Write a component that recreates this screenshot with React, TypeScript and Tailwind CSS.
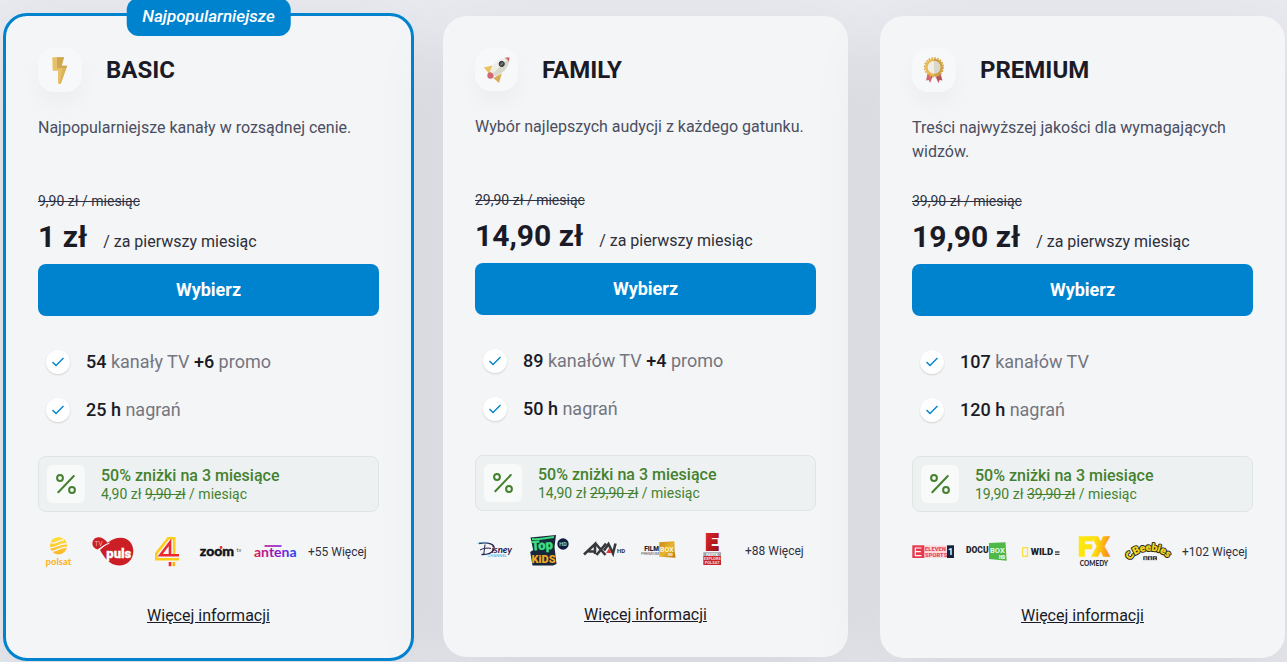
import type { ReactNode } from 'react';

type Plan = {
  id: string;
  name: string;
  icon: ReactNode;
  description: string;
  oldPrice: string;
  price: string;
  features: { strong: string; text: string; extra?: string; extraText?: string }[];
  promoPrice: string;
  promoOldPrice: string;
  logos: { name: string; art: ReactNode }[];
  more: string;
  popular?: boolean;
};

function BoltIcon() {
  return (
    <svg width="28" height="28" viewBox="0 0 28 28" aria-hidden="true">
      <path d="M6.3 1.3H18l-2.3 8.4h5.6l-6.6 18H12v-13H6.7z" fill="#e7c068" />
      <path d="M11 1.3h7l-2.3 8.4h5.6l-1 2.6H11z" fill="#cda753" />
      <path d="M20.3 12.3l-5.6 15.4H13.3l3.5-15.4z" fill="#d9b25c" />
    </svg>
  );
}

function RocketIcon() {
  return (
    <svg width="27" height="27" viewBox="0 0 27 27" aria-hidden="true">
      <path d="M.8 11.6 9.5 9.5l-3 8.6z" fill="#ecc261" />
      <path d="M18.8 17.6 16 27l-5.6-5z" fill="#d7ae55" />
      <circle cx="7.5" cy="19.5" r="3.2" fill="#d06a72" />
      <path d="M26.3 1.3C26.5 9 23 16 12.5 20.3L7 15C11 5.5 18.5 1.2 26.3 1.3z" fill="#efeee6" />
      <path d="M26.3 1.3C26.5 9 23 16 12.5 20.3l-2.7-2.6z" fill="#dad8cb" />
      <path d="M26.3 1.3c.1 1.700-.1 3.200-.5 4.600-.9-1.900-2.200-3.200-4.200-3.900 1.500-.5 3-.7 4.700-.7z" fill="#d06a72" />
      <circle cx="18.7" cy="7.9" r="2.6" fill="#4b5053" stroke="#30363a" />
      <path d="M17.5 9.3 20 6.7" stroke="#a5aaab" strokeWidth=".8" />
    </svg>
  );
}

function MedalIcon() {
  return (
    <svg width="28" height="28" viewBox="0 0 28 28" aria-hidden="true">
      <path d="M7.5 17.5 6 24.5l2.7-.5 1.3 3 3.2-7.5z" fill="#d36772" />
      <path d="M20.5 17.5l1.9 7-2.8-.5-1.2 3-3.2-7.5z" fill="#b9545f" />
      <circle cx="14" cy="11.3" r="9.4" fill="none" stroke="#d9a845" strokeWidth="1.5" strokeDasharray="1.7 1.25" />
      <circle cx="14" cy="11.3" r="8.9" fill="#e9b953" />
      <path d="M14 2.4a8.9 8.9 0 0 1 0 17.8z" fill="#cfa048" />
      <circle cx="14" cy="11.3" r="6.3" fill="#f0efe5" />
      <path d="M14 5a6.3 6.3 0 0 1 0 12.6z" fill="#dad8ca" />
    </svg>
  );
}

function CheckIcon() {
  return (
    <svg width="14" height="12" viewBox="0 0 14 12" fill="none" aria-hidden="true">
      <path d="M1.5 6 5 9.5 12.5 2" stroke="#0083cf" strokeWidth="1.4" />
    </svg>
  );
}

function PercentIcon() {
  return (
    <svg width="20" height="20" viewBox="0 0 20 20" fill="none" stroke="#44812f" strokeWidth="2" aria-hidden="true">
      <path d="M2.3 18.3 17.8 2" strokeLinecap="round" />
      <circle cx="4" cy="4" r="2.9" />
      <circle cx="16" cy="16" r="2.9" />
    </svg>
  );
}

const polsat = (
  <>
    <defs>
      <linearGradient id="polsatSun" x1="0" y1="0" x2="0" y2="1">
        <stop offset="0" stopColor="#ffe23a" />
        <stop offset="1" stopColor="#fdb42a" />
      </linearGradient>
    </defs>
    <circle cx="20.5" cy="9.7" r="8.7" fill="url(#polsatSun)" />
    <g fill="none" stroke="#f4f5f7" strokeWidth="1.3">
      <path d="M12 6.5c5 3 9-3.5 14-2.5" />
      <path d="M11 11c6 3 11-5 18-3" />
      <path d="M12 15c6 2 10-5 17-3.5" />
    </g>
    <text x="20.5" y="29" textAnchor="middle" fontSize="9.5" fontWeight="900" fill="#fbb52c" fontFamily="Lato">polsat</text>
  </>
);

const puls = (
  <>
    <path d="M8 14C14 9 19 1.5 29 1.8c7 .2 12.3 5.500 12.3 13.2C41.3 24 35 29.5 27 29.4 17 29.3 12 21 8 14z" fill="#cb1f25" />
    <path d="M6.3 1.3c4.500-.3 7 3 9.700 5.700-3.500 1-7 4.500-10.500 6.500C2 12.5.3 10 .4 7.200.6 4 3 1.5 6.3 1.3z" fill="#cb1f25" />
    <path d="M5.500 14.500C9 12.5 13 8.5 17.5 7.2" stroke="#f4f5f7" fill="none" />
    <text x="2.5" y="9.5" fontSize="6.5" fill="#f3b5b5" fontFamily="Roboto">TV</text>
    <text x="26.8" y="21.500" textAnchor="middle" fontSize="13" fontWeight="900" fill="#fff" stroke="#fff" strokeWidth=".3" fontFamily="Roboto">puls</text>
  </>
);

const tv4 = (
  <g fill="none" strokeWidth="2.6">
    <path d="M28.2 18V2.3H22.3L10.3 17.5v5.8H33" stroke="#fdcd17" />
    <path d="M24 18V6.3L14.3 19.2H33" stroke="#ea2a30" />
    <path d="M24 26v4.2" stroke="#ea2a30" />
    <path d="M27.8 26v4.2" stroke="#fdb515" />
  </g>
);

const zoom = (
  <>
    <text x="-.2" y="19.5" fontSize="14" fontWeight="900" fill="#12141c" stroke="#12141c" strokeWidth=".4" fontFamily="Lato">zoom</text>
    <circle cx="21" cy="11.5" r="1.4" fill="#e52d3c" />
    <text x="36.5" y="15.5" fontSize="6" fill="#555861" fontFamily="Roboto">tv</text>
  </>
);

const antena = (
  <>
    <defs>
      <linearGradient id="antenaFill" gradientUnits="userSpaceOnUse" x1="0" y1="0" x2="42" y2="0">
        <stop offset="0" stopColor="#dc2348" />
        <stop offset=".4" stopColor="#a414b4" />
        <stop offset=".7" stopColor="#7a22df" />
        <stop offset="1" stopColor="#1f45f5" />
      </linearGradient>
    </defs>
    <text x="0" y="20.5" fontSize="14" fontWeight="700" fill="url(#antenaFill)" fontFamily="Lato">antena</text>
    <path d="M10.5 9.8h17" stroke="url(#antenaFill)" strokeWidth="0" />
    <rect x="10.5" y="9.2" width="17" height="1.6" fill="url(#antenaFill)" />
  </>
);

const disney = (
  <>
    <path d="M4 8.5C12 7 22 9 18.5 15c-1.5 3-6 4.7-12 4.5" fill="none" stroke="#23234f" strokeWidth="1.3" />
    <path d="M10 9.5 8.8 19M5 15c3-2 9-2.3 11-1.5" fill="none" stroke="#23234f" />
    <path d="M2.5 8.5c3-1.500 8-1.500 11-.5" fill="none" stroke="#4fb4df" strokeWidth=".7" />
    <text x="16.5" y="18" fontSize="9.5" fontStyle="italic" fontWeight="700" fill="#23234f" fontFamily="Lato">isney</text>
    <text x="12.5" y="22" fontSize="4" fontWeight="700" fill="#4cc5ee" fontFamily="Lato">CHANNEL</text>
  </>
);

const topKids = (
  <>
    <path d="M1.500 2.500 27 0 25.500 12l2 17L24 30.500H3.500L1.200 17l3-2z" fill="#17283b" />
    <text x="2.6" y="15.500" transform="rotate(-4 4 15)" fontSize="13" fontWeight="900" fill="#3edc81" stroke="#3edc81" strokeWidth=".4" fontFamily="Roboto">Top</text>
    <path d="M3 4c7 1 14-1.500 22-2" stroke="#3edc81" strokeWidth="2" fill="none" />
    <text x="2.500" y="27.700" fontSize="11" fontWeight="900" fill="#f6a823" fontFamily="Roboto">KiDS</text>
    <circle cx="34" cy="9" r="5.7" fill="#101c40" />
    <text x="34" y="11" textAnchor="middle" fontSize="5.5" fontWeight="700" fill="#7ad8f7" fontFamily="Roboto">HD</text>
  </>
);

const axn = (
  <>
    <g fill="none" stroke="#37393d" strokeWidth="2.6">
      <path d="M1 19.5 12 9v10M5.5 16.5H12" />
      <path d="M12.5 8.5 22.5 20M23 8.5 13.5 20" />
      <path d="M21 15.5 25.5 9l4.5 9.5 2.5-10" />
    </g>
    <path d="m26 13.3 2.8 4.7h-5.6z" fill="#e0363a" />
    <text x="34" y="17.7" fontSize="6" fontWeight="700" fill="#303236" fontFamily="Roboto">HD</text>
  </>
);

const filmbox = (
  <>
    <defs>
      <linearGradient id="boxGold" x1="0" y1="0" x2="1" y2="1">
        <stop offset="0" stopColor="#c88612" />
        <stop offset=".5" stopColor="#e8b530" />
        <stop offset="1" stopColor="#bb740c" />
      </linearGradient>
    </defs>
    <text x="22" y="15.7" textAnchor="end" fontSize="6.5" fontWeight="900" fill="#22242b" fontFamily="Roboto">FILM</text>
    <text x="22" y="20" textAnchor="end" fontSize="4" fill="#50535b" fontFamily="Roboto">PREMIUM</text>
    <path d="M22.3 7.3 37.5 6.2v8.5l1 8-16.2-1z" fill="url(#boxGold)" />
    <text x="23" y="16.5" fontSize="7" fontWeight="700" fill="#fff5c9" fontFamily="Roboto">BOX</text>
    <text x="31" y="20.7" fontSize="3.5" fontWeight="700" fill="#fff" fontFamily="Roboto">HD</text>
  </>
);

const polsatE = (
  <>
    <defs>
      <linearGradient id="eRed" x1="0" y1="0" x2="1" y2="1">
        <stop offset="0" stopColor="#e2272f" />
        <stop offset="1" stopColor="#8f1015" />
      </linearGradient>
    </defs>
    <text x="21" y="15.3" textAnchor="middle" fontSize="22" fontWeight="900" fill="url(#eRed)" stroke="url(#eRed)" strokeWidth="2" fontFamily="Roboto">E</text>
    <rect x="12.3" y="17.2" width="17.7" height="4" fill="#a5a6a9" />
    <text x="21.2" y="20.6" textAnchor="middle" fontSize="4" fontWeight="700" fill="#f4f5f7" fontFamily="Roboto">FAST&amp;</text>
    <rect x="12.3" y="21" width="17.7" height="9" fill="#c9252d" />
    <text x="21.2" y="25" textAnchor="middle" fontSize="4" fontWeight="700" fill="#f3d9da" fontFamily="Roboto">EXPLORE</text>
    <text x="21.2" y="29.2" textAnchor="middle" fontSize="4" fontWeight="700" fill="#f3d9da" fontFamily="Roboto">POLSAT</text>
  </>
);

const elevenSports = (
  <>
    <rect x="12" y="9.5" width="23" height="12.5" fill="#fbd9dd" />
    <rect x=".3" y="9.3" width="12" height="12.7" fill="#e8394c" />
    <path d="M9.5 12H3.3v7.6h6.2M3.3 15.7h5.5" fill="none" stroke="#fff" strokeWidth="1.2" />
    <text x="13" y="15" fontSize="5.8" fontWeight="900" fill="#e8485a" fontFamily="Roboto">ELEVEN</text>
    <text x="13" y="21" fontSize="5.8" fontWeight="900" fill="#e8485a" fontFamily="Roboto">SPORTS</text>
    <rect x="35" y="9.3" width="7" height="12.7" fill="#142338" />
    <text x="38.5" y="19" textAnchor="middle" fontSize="9" fontWeight="700" fill="#fff" fontFamily="Roboto">1</text>
  </>
);

const docubox = (
  <>
    <text x="0" y="17" fontSize="8.5" fontWeight="900" fill="#24262b" fontFamily="Roboto">DOCU</text>
    <path d="m23 7 16.5-.8 1.2 18.6L23 23z" fill="#4fb947" />
    <text x="24" y="17" fontSize="7.5" fontWeight="700" fill="#e9f8e6" fontFamily="Roboto">BOX</text>
    <text x="33" y="22.5" fontSize="4.5" fontWeight="900" fill="#fff" fontFamily="Roboto">HD</text>
  </>
);

const wild = (
  <>
    <rect x="2.7" y="11.7" width="4.8" height="8.6" fill="none" stroke="#fbe04b" strokeWidth="1.4" />
    <text x="10.7" y="19" fontSize="9.5" fontWeight="900" fill="#1d1f25" fontFamily="Roboto">WILD</text>
    <path d="M35 16h4.5M35 18.3h4.5" stroke="#45474d" strokeWidth="1.3" />
  </>
);

const fxComedy = (
  <>
    <defs>
      <linearGradient id="fxFill" gradientUnits="userSpaceOnUse" x1="3" y1="0" x2="37" y2="6">
        <stop offset="0" stopColor="#fdea10" />
        <stop offset=".55" stopColor="#fde010" />
        <stop offset="1" stopColor="#f98e13" />
      </linearGradient>
    </defs>
    <text x="19.8" y="20" textAnchor="middle" fontSize="26" fontWeight="900" fill="url(#fxFill)" stroke="url(#fxFill)" strokeWidth="1.6" fontFamily="Roboto">FX</text>
    <text x="20" y="30" textAnchor="middle" fontSize="6.5" fontWeight="900" fill="#2a2c32" fontFamily="Lato">COMEDY</text>
  </>
);

const cbeebies = (
  <>
    <path id="cbeebiesArc" d="M3 24.500C7 12 35 10 42 26" fill="none" />
    <g fontSize="10" fontWeight="900" fontFamily="Lato">
      <text fill="#24231a" stroke="#24231a" strokeWidth="2.4" strokeLinejoin="round">
        <textPath href="#cbeebiesArc">CBeebies</textPath>
      </text>
      <text fill="#f7dd1e" stroke="#f7dd1e" strokeWidth=".4" aria-hidden="true">
        <textPath href="#cbeebiesArc">CBeebies</textPath>
      </text>
    </g>
    <g fill="#24262b">
      <rect x="15.3" y="20.3" width="4.2" height="3.8" />
      <rect x="20" y="20.3" width="4.2" height="3.8" />
      <rect x="24.7" y="20.3" width="4.2" height="3.8" />
    </g>
    <g fontSize="3.5" fontWeight="700" fill="#e8e9eb" fontFamily="Roboto">
      <text x="16.3" y="23.5">B</text>
      <text x="21" y="23.5">B</text>
      <text x="25.7" y="23.5">C</text>
    </g>
  </>
);

const plans: Plan[] = [
  {
    id: 'basic',
    name: 'BASIC',
    icon: <BoltIcon />,
    description: 'Najpopularniejsze kanały w rozsądnej cenie.',
    oldPrice: '9,90 zł / miesiąc',
    price: '1 zł',
    features: [
      { strong: '54', text: 'kanały TV', extra: '+6', extraText: 'promo' },
      { strong: '25 h', text: 'nagrań' },
    ],
    promoPrice: '4,90 zł',
    promoOldPrice: '9,90 zł',
    logos: [
      { name: 'Polsat', art: polsat },
      { name: 'TV Puls', art: puls },
      { name: 'TV4', art: tv4 },
      { name: 'Zoom TV', art: zoom },
      { name: 'Antena HD', art: antena },
    ],
    more: '+55 Więcej',
    popular: true,
  },
  {
    id: 'family',
    name: 'FAMILY',
    icon: <RocketIcon />,
    description: 'Wybór najlepszych audycji z każdego gatunku.',
    oldPrice: '29,90 zł / miesiąc',
    price: '14,90 zł',
    features: [
      { strong: '89', text: 'kanałów TV', extra: '+4', extraText: 'promo' },
      { strong: '50 h', text: 'nagrań' },
    ],
    promoPrice: '14,90 zł',
    promoOldPrice: '29,90 zł',
    logos: [
      { name: 'Disney Channel', art: disney },
      { name: 'Top Kids HD', art: topKids },
      { name: 'AXN HD', art: axn },
      { name: 'FilmBox Premium', art: filmbox },
      { name: 'E', art: polsatE },
    ],
    more: '+88 Więcej',
  },
  {
    id: 'premium',
    name: 'PREMIUM',
    icon: <MedalIcon />,
    description: 'Treści najwyższej jakości dla wymagających widzów.',
    oldPrice: '39,90 zł / miesiąc',
    price: '19,90 zł',
    features: [
      { strong: '107', text: 'kanałów TV' },
      { strong: '120 h', text: 'nagrań' },
    ],
    promoPrice: '19,90 zł',
    promoOldPrice: '39,90 zł',
    logos: [
      { name: 'Eleven Sports 1', art: elevenSports },
      { name: 'DocuBox HD', art: docubox },
      { name: 'Wild', art: wild },
      { name: 'FX Comedy', art: fxComedy },
      { name: 'CBeebies', art: cbeebies },
    ],
    more: '+102 Więcej',
  },
];

function PlanCard({ plan }: { plan: Plan }) {
  return (
    <section
      className={`relative rounded-3xl bg-[#f4f5f7] px-8 pt-8 pb-[30px] shadow-[0_24px_72px_rgba(0,0,0,0.09)] ${
        plan.popular ? 'border-3 border-[#0083cf] -m-[3px]' : ''
      }`}
    >
      {plan.popular && (
        <span className="absolute -top-[18px] left-1/2 flex h-[38px] -translate-x-1/2 items-center rounded-xl bg-[#0083cf] px-4 text-[17px] font-medium text-white italic">
          Najpopularniejsze
        </span>
      )}

      <div className="flex items-center gap-6">
        <div className="rounded-2xl bg-[#f7f8fa] p-2 shadow-[0_12px_20px_rgba(0,0,0,0.03)]">{plan.icon}</div>
        <h2 className="text-2xl font-bold text-[#1a1b26]">{plan.name}</h2>
      </div>

      <p className="mt-6 min-h-12 text-[#4a4e60]">{plan.description}</p>

      <div className="mt-[25px]">
        <s className="block text-sm leading-6 text-[#2d3142]">{plan.oldPrice}</s>
        <p className="mb-[3px] flex h-12 items-baseline gap-4 text-[#1a1b26]">
          <span className="text-3xl leading-12 font-bold">{plan.price}</span>
          <span className="text-[#2d2f3a]">/ za pierwszy miesiąc</span>
        </p>
      </div>

      <button type="button" className="h-[52px] w-full rounded-lg bg-[#0083cf] text-lg font-bold text-white">
        Wybierz
      </button>

      <ul className="my-[22px] text-lg text-[#74767f]">
        {plan.features.map((feature) => (
          <li key={feature.strong} className="flex h-12 items-center gap-4 pl-2">
            <span className="flex size-6 items-center justify-center rounded-full bg-white shadow-[0_1px_2px_rgba(0,0,0,0.15)]">
              <CheckIcon />
            </span>
            <span>
              <b className="font-medium text-[#1a1b26]">{feature.strong}</b> {feature.text}
              {feature.extra && (
                <>
                  {' '}
                  <b className="font-medium text-[#1a1b26]">{feature.extra}</b> {feature.extraText}
                </>
              )}
            </span>
          </li>
        ))}
      </ul>

      <div className="flex items-center gap-4 rounded-lg border border-[#dfe6e1] bg-[#edf1f2] p-2 text-[#44812f]">
        <div className="flex size-[38px] items-center justify-center rounded-md bg-[#f8faf9]">
          <PercentIcon />
        </div>
        <div>
          <p className="leading-5 font-medium">50% zniżki na 3 miesiące</p>
          <p className="text-sm leading-4">
            {plan.promoPrice} <s>{plan.promoOldPrice}</s> / miesiąc
          </p>
        </div>
      </div>

      <div className="mt-5 flex h-10 items-center gap-3">
        {plan.logos.map((logo) => (
          <svg
            key={logo.name}
            role="img"
            aria-label={logo.name}
            className="shrink-0 overflow-visible"
            width="42"
            height="34"
            viewBox="0 -1 42 34"
          >
            {logo.art}
          </svg>
        ))}
        <span className="text-xs whitespace-nowrap text-[#2d3142]">{plan.more}</span>
      </div>

      <div className="mt-8 text-center">
        <a href={`#${plan.id}`} className="text-[#1a1b26] underline">
          Więcej informacji
        </a>
      </div>
    </section>
  );
}

export default function App() {
  return (
    <main className="min-h-screen overflow-hidden bg-[#e9eaf0] pt-4 pr-0.5 pl-1.5 font-[Roboto,sans-serif]">
      <div className="grid grid-cols-3 items-start gap-8">
        {plans.map((plan) => (
          <PlanCard key={plan.id} plan={plan} />
        ))}
      </div>
    </main>
  );
}
